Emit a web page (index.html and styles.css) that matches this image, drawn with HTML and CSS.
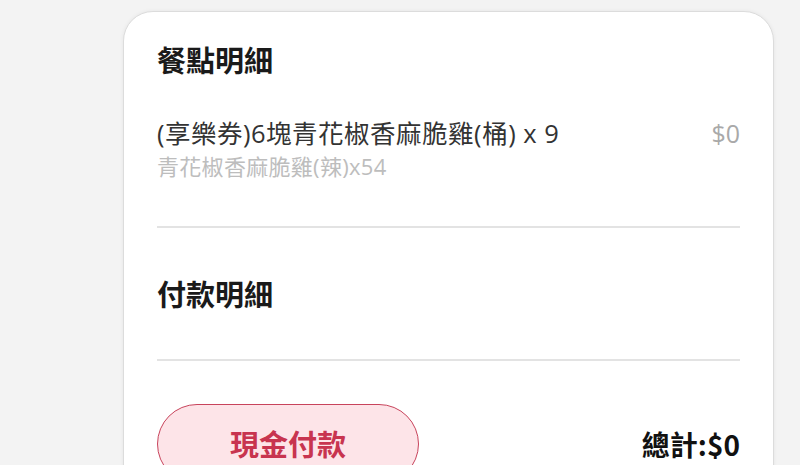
FILE: index.html
```html
<!DOCTYPE html>
<html lang="zh-Hant">
<head>
<meta charset="utf-8">
<link rel="stylesheet" href="styles.css">
</head>
<body>
<div class="card">
  <h2 class="section-title">餐點明細</h2>
  <div class="item">
    <div class="item-main">
      <div class="item-name">(享樂券)6塊青花椒香麻脆雞(桶) x 9</div>
      <div class="item-sub">青花椒香麻脆雞(辣)x54</div>
    </div>
    <div class="item-price">$0</div>
  </div>
  <hr class="divider first">
  <h2 class="section-title pay">付款明細</h2>
  <hr class="divider second">
  <div class="footer">
    <button class="cash-btn">現金付款</button>
    <div class="total">總計:$0</div>
  </div>
</div>
</body>
</html>
```

FILE: styles.css
```css
html, body {
  margin: 0;
  padding: 0;
  background: #f3f3f3;
  height: 465px;
  overflow: hidden;
  font-family: "Noto Sans CJK TC", "Noto Sans", sans-serif;
}
.card {
  margin: 11px 0 0 123px;
  width: 651px;
  box-sizing: border-box;
  background: #fff;
  border: 1.5px solid #dcdcdc;
  border-radius: 30px;
  box-shadow: 0 0 4px rgba(0,0,0,0.06);
  padding: 27px 33px 40px 33px;
  min-height: 520px;
}
.section-title {
  margin: 0;
  font-size: 29px;
  line-height: 40px;
  font-weight: 700;
  color: #1a1a1a;
}
.item {
  margin-top: 38px;
  display: flex;
  justify-content: space-between;
  align-items: flex-start;
}
.item-name {
  font-family: "Open Sans", "Noto Sans CJK TC", sans-serif;
  font-size: 25.5px;
  letter-spacing: 0.5px;
  line-height: 32px;
  color: #333;
}
.item-sub {
  font-family: "Open Sans", "Noto Sans CJK TC", sans-serif;
  margin-top: 3px;
  font-size: 22px;
  letter-spacing: 0.3px;
  line-height: 28px;
  color: #bdbdbd;
}
.item-price {
  font-family: "Open Sans", "Noto Sans CJK TC", sans-serif;
  font-size: 25px;
  line-height: 32px;
  color: #a9a9a9;
}
.divider {
  border: 0;
  height: 2px;
  background: #e3e3e3;
  margin: 0;
}
.divider.first { margin-top: 46px; }
.pay { margin-top: 45px; }
.divider.second { margin-top: 46px; }
.footer {
  margin-top: 43px;
  display: flex;
  justify-content: space-between;
  align-items: flex-start;
}
.cash-btn {
  width: 262px;
  height: 80px;
  border-radius: 40px;
  border: 1.5px solid #c8445c;
  background: #fde4e8;
  color: #c8344f;
  font-family: inherit;
  font-size: 29px;
  font-weight: 700;
  line-height: 76px;
  padding: 0;
  display: flex;
  justify-content: center;
  align-items: flex-start;
}
.total {
  margin-top: 20px;
  font-size: 28px;
  line-height: 40px;
  font-weight: 700;
  color: #111;
}
```
